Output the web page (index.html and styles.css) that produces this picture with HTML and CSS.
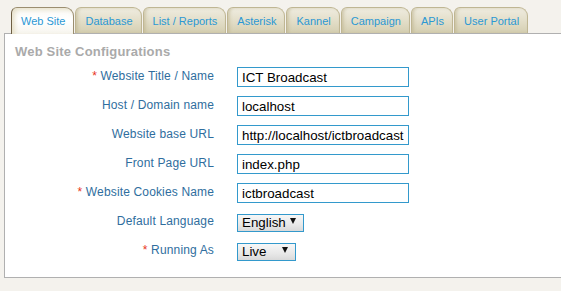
FILE: index.html
```html
<!DOCTYPE html>
<html lang="en">
<head>
    <meta charset="UTF-8">
    <meta name="viewport" content="width=device-width, initial-scale=1.0">
    <title>Web Site Configurations</title>
    <link rel="stylesheet" href="styles.css">
</head>
<body>
    <div class="tabs">
        <a class="tab active" href="#">Web Site</a>
        <a class="tab" href="#">Database</a>
        <a class="tab" href="#">List / Reports</a>
        <a class="tab" href="#">Asterisk</a>
        <a class="tab" href="#">Kannel</a>
        <a class="tab" href="#">Campaign</a>
        <a class="tab" href="#">APIs</a>
        <a class="tab" href="#">User Portal</a>
    </div>

    <div class="panel">
        <h2 class="panel-title">Web Site Configurations</h2>
        <form class="config-form">
            <label class="field-label"><span class="req">*</span> Website Title / Name</label>
            <input class="field-input" type="text" value="ICT Broadcast">

            <label class="field-label">Host / Domain name</label>
            <input class="field-input" type="text" value="localhost">

            <label class="field-label">Website base URL</label>
            <input class="field-input" type="text" value="http://localhost/ictbroadcast">

            <label class="field-label">Front Page URL</label>
            <input class="field-input" type="text" value="index.php">

            <label class="field-label"><span class="req">*</span> Website Cookies Name</label>
            <input class="field-input" type="text" value="ictbroadcast">

            <label class="field-label">Default Language</label>
            <div class="select-wrap lang">
                <select class="field-select">
                    <option>English</option>
                </select>
            </div>

            <label class="field-label"><span class="req">*</span> Running As</label>
            <div class="select-wrap mode">
                <select class="field-select">
                    <option>Live</option>
                </select>
            </div>
        </form>
    </div>
</body>
</html>
```

FILE: styles.css
```css
body {
    margin: 0;
    background: #f4f2ed;
    font-family: 'Liberation Sans', Arial, sans-serif;
}
.tabs {
    display: flex;
    align-items: flex-end;
    gap: 1px;
    margin-top: 7px;
    padding-left: 11px;
    position: relative;
    z-index: 1;
}
.tab {
    display: flex;
    align-items: center;
    height: 25px;
    padding: 0 8px 0 9px;
    font-size: 11px;
    color: #2b98d4;
    text-decoration: none;
    background: linear-gradient(180deg, #efece0 0%, #e2ddc7 55%, #d5cfb2 100%);
    border: 1px solid #bfb693;
    border-bottom: none;
    border-radius: 6px 9px 0 0;
    box-shadow: inset 2px 0 3px rgba(185, 175, 135, 0.5);
}
.tab.active {
    height: 26px;
    margin-bottom: -1px;
    background: linear-gradient(180deg, #fbfaf6 0%, #ffffff 50%, #f7f5ee 100%);
    border-color: #9b8e70;
    border-left-color: #6e5f44;
    box-shadow: inset 3px 2px 4px rgba(215, 205, 170, 0.55);
}
.panel {
    margin-left: 4px;
    background: #fff;
    border: 1px solid #b0b0b0;
    border-right: none;
    padding: 0 0 16px 10px;
}
.panel-title {
    margin: 0;
    padding-top: 10px;
    font-size: 13px;
    line-height: 16px;
    letter-spacing: 0.2px;
    font-weight: bold;
    color: #aaaaaa;
}
.config-form {
    display: grid;
    grid-template-columns: 199px auto;
    grid-auto-rows: 20px;
    column-gap: 23px;
    row-gap: 9px;
    align-items: center;
    justify-items: start;
    margin-top: 7px;
}
.field-label {
    justify-self: end;
    font-size: 12px;
    letter-spacing: 0.15px;
    color: #2f6e9e;
    margin-top: -2px;
}
.req {
    color: #e8341c;
}
.field-input {
    box-sizing: border-box;
    width: 172px;
    height: 20px;
    margin: 0;
    padding: 0 4px;
    border: 1px solid #3399cc;
    font-family: 'Liberation Sans', Arial, sans-serif;
    font-size: 13.33px;
    color: #000;
    outline: none;
}
.select-wrap {
    position: relative;
    height: 18px;
}
.select-wrap.lang { width: 67px; }
.select-wrap.mode { width: 59px; }
.select-wrap::after {
    content: "";
    position: absolute;
    right: 8px;
    top: 5px;
    border-left: 3px solid transparent;
    border-right: 3px solid transparent;
    border-top: 6px solid #111;
    pointer-events: none;
}
.field-select {
    appearance: none;
    -webkit-appearance: none;
    box-sizing: border-box;
    width: 100%;
    height: 18px;
    margin: 0;
    padding: 0 0 0 4px;
    border: 1px solid #3399cc;
    border-radius: 0;
    background: linear-gradient(180deg, #f7f7f7 0%, #e8e8e8 60%, #d9d9d9 100%);
    font-family: 'Liberation Sans', Arial, sans-serif;
    font-size: 13.33px;
    color: #000;
}
```
